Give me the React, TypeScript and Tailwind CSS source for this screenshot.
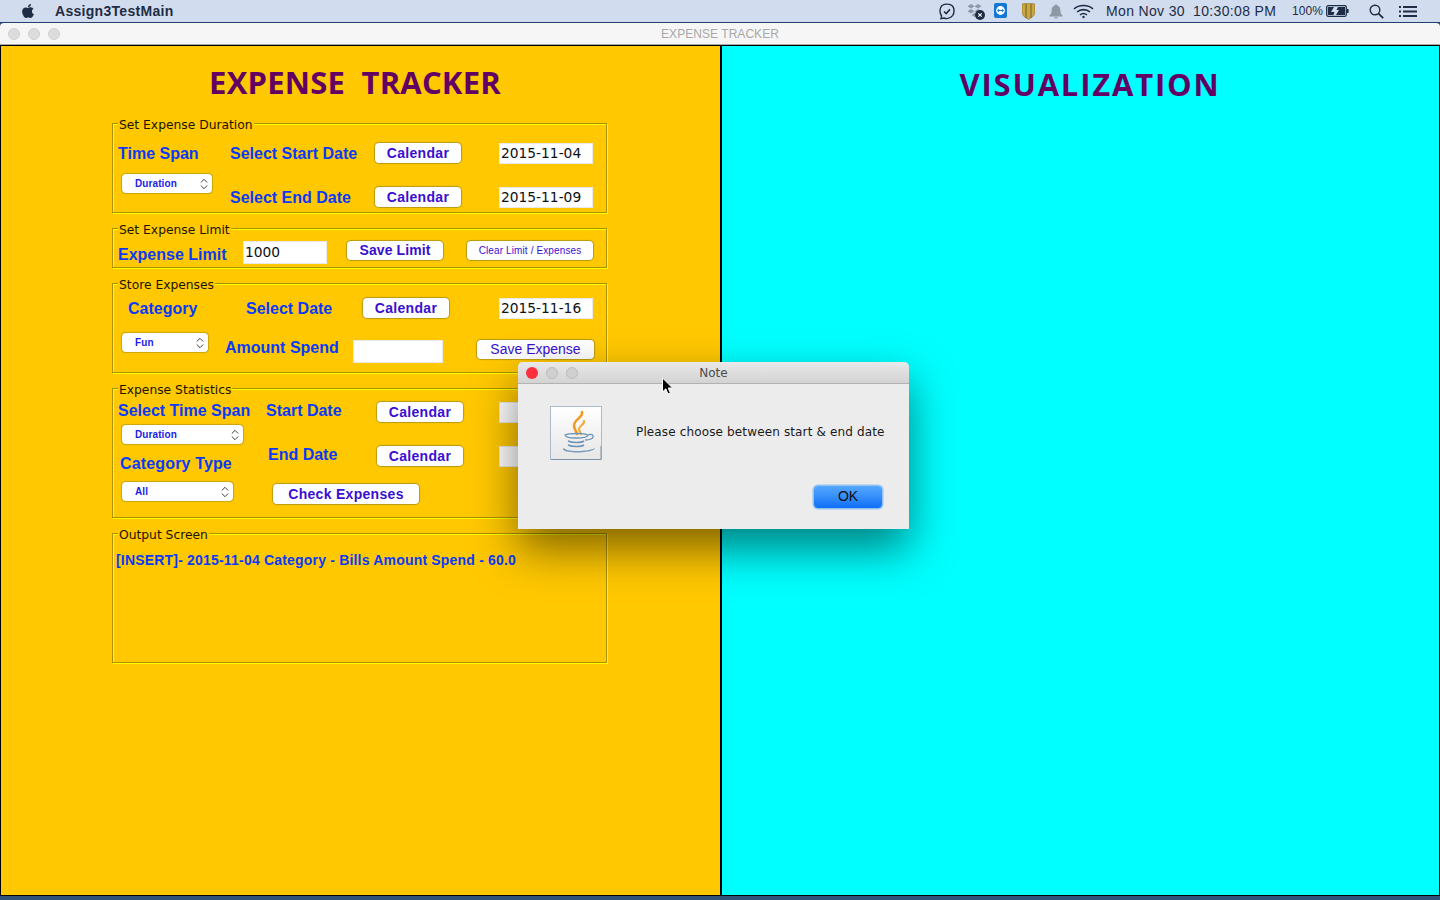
import React from 'react'
import { FaApple } from 'react-icons/fa'
import { ChevronsUpDown } from 'lucide-react'

const labelClass = "font-['Liberation_Sans',sans-serif] font-bold text-[16px] leading-[18px] text-[#0a3af8] whitespace-nowrap"

const Group = ({ title, className, children }: { title: string; className: string; children: React.ReactNode }) => (
    <fieldset className={`w-[495px] border border-[#ad9100] shadow-[1px_1px_0_#ffff00,inset_1px_1px_0_#ffff00] ${className}`}>
        <legend className="ml-[5px] h-[17px] bg-[#ffc800] px-[1px] font-['DejaVu_Sans',sans-serif] text-[12.3px] leading-[21px] text-[#1a1400]">{title}</legend>
        {children}
    </fieldset>
)

const Button = ({ label, className }: { label: string; className: string }) => (
    <div className={`flex h-[20px] shrink-0 items-center justify-center rounded-[4px] bg-white font-['Liberation_Sans',sans-serif] text-[#3a0fd2] shadow-[0_0_1px_1px_#b89a10] ${className}`}>
        {label}
    </div>
)

const Select = ({ label, className }: { label: string; className: string }) => (
    <div className={`flex h-[19px] shrink-0 items-center justify-between rounded-[4px] bg-white pl-[13px] pr-[1px] font-['Liberation_Sans',sans-serif] text-[10px] font-bold tracking-[0.1px] text-[#1a22e8] shadow-[0_0_1px_0.5px_#c9a60c] ${className}`}>
        <span>{label}</span>
        <ChevronsUpDown size={14} strokeWidth={1.6} className="text-[#333]" />
    </div>
)

const Field = ({ value, className }: { value: string; className: string }) => (
    <div className={`flex h-[21px] shrink-0 items-center border border-[#e9e9e9] bg-white pl-[1px] pt-[1px] font-['DejaVu_Sans',sans-serif] text-[13.8px] text-[#111] ${className}`}>
        {value}
    </div>
)

const JavaIcon = () => (
    <svg width="52" height="54" viewBox="0 0 52 54" className="rounded-[1px]">
        <defs>
            <linearGradient id="javaBg" x1="0" y1="0" x2="0" y2="1">
                <stop offset="0" stopColor="#ffffff" />
                <stop offset="1" stopColor="#e6e6e6" />
            </linearGradient>
        </defs>
        <rect x="0.5" y="0.5" width="51" height="53" fill="url(#javaBg)" stroke="#a9bccd" />
        <path d="M1 53.5 H51 V40" fill="none" stroke="#7f93a8" />
        <path d="M32 6 C34 11 23 14 24 20 C24.5 23 26 25 27 28" fill="none" stroke="#f29a1f" strokeWidth="2.6" strokeLinecap="round" />
        <path d="M34 15 C35 18 29 20 29 23 C29 25 30 26 31 28" fill="none" stroke="#f5ab3c" strokeWidth="2.2" strokeLinecap="round" />
        <path d="M15 29 C19 27 34 27 38 29 C38 31 33 32 26 32 C19 32 15 31 15 29 Z" fill="none" stroke="#6d93b5" strokeWidth="1.3" />
        <path d="M38 29 C43 27 45 31 41 33 C39 34 37 34 35 34" fill="none" stroke="#6d93b5" strokeWidth="1.3" />
        <path d="M18 35 C22 37 31 37 34 35" fill="none" stroke="#6d93b5" strokeWidth="1.6" />
        <path d="M18 39 C22 41 31 41 34 39" fill="none" stroke="#6d93b5" strokeWidth="1.6" />
        <path d="M14 42 C10 45 20 46.5 27 46.5 C34 46.5 45 45 45 42 C42 44 34 45 27 45 C20 45 15 44 14 42 Z" fill="#7b9dbb" />
    </svg>
)

const MenuBarIcons = () => (
    <div className="ml-auto flex items-center pr-[23px] text-[#1e2c45]">
        <svg width="16" height="17" viewBox="0 0 16 17" fill="none" stroke="#1e2c45" strokeWidth="1.4">
            <path d="M3 2.5 C6 0.6 11 0.6 13.5 3 C15.6 5.5 15.5 10 13.6 12.6 C11.6 15 8 16.2 5 15 L2 15.6 L2.6 13 C0.4 10 0.3 5 3 2.5 Z" />
            <path d="M5 8.5 L7.2 10.6 L11 6.4" strokeWidth="1.6" />
        </svg>
        <svg width="19" height="17" viewBox="0 0 19 17" className="ml-[11px]">
            <g fill="#8f98a6">
                <path d="M5 1 L8.5 3.2 L5 5.5 L1.5 3.2 Z" />
                <path d="M12 1 L15.5 3.2 L12 5.5 L8.5 3.2 Z" />
                <path d="M5 6 L8.5 8.2 L5 10.5 L1.5 8.2 Z" />
                <path d="M12 6 L15.5 8.2 L12 10.5 L8.5 8.2 Z" />
                <path d="M8.5 10 L11 12 L8.5 14 L5.5 12 Z" />
            </g>
            <circle cx="14" cy="12" r="5" fill="#1e2c45" />
            <path d="M12.3 10.3 L15.7 13.7 M15.7 10.3 L12.3 13.7" stroke="#fff" strokeWidth="1.1" />
        </svg>
        <svg width="13" height="16" viewBox="0 0 13 16" className="ml-[9px]">
            <rect x="0" y="0" width="13" height="15" rx="2" fill="#1477d4" />
            <circle cx="6.5" cy="7.5" r="4.4" fill="#fff" />
            <path d="M3 7.5 L5 5.8 V6.9 H8 V5.8 L10 7.5 L8 9.2 V8.1 H5 V9.2 Z" fill="#1477d4" />
        </svg>
        <svg width="13" height="17" viewBox="0 0 13 17" className="ml-[15px]">
            <path d="M0 1 C4 0 9 0 13 1 V9 C13 13 9 15 6.5 16.5 C4 15 0 13 0 9 Z" fill="#c9a63f" stroke="#8a7330" strokeWidth="0.6" />
            <path d="M4 1 V15 M9 1 V15" stroke="#7d6c34" strokeWidth="1.2" />
        </svg>
        <svg width="14" height="15" viewBox="0 0 14 15" className="ml-[14px]" fill="#8f98a6">
            <path d="M7 0.5 C7.8 0.5 8.2 1 8.2 1.6 C10.4 2.2 11.4 4 11.4 6.5 C11.4 9 12.2 10.4 13.6 11.6 V12.4 H0.4 V11.6 C1.8 10.4 2.6 9 2.6 6.5 C2.6 4 3.6 2.2 5.8 1.6 C5.8 1 6.2 0.5 7 0.5 Z" />
            <path d="M5.4 13 H8.6 C8.4 14 7.8 14.6 7 14.6 C6.2 14.6 5.6 14 5.4 13 Z" />
        </svg>
        <svg width="21" height="15" viewBox="0 0 21 15" className="ml-[10px]" fill="none" stroke="#1e2c45" strokeWidth="1.6">
            <path d="M1 5 C6 0.4 15 0.4 20 5" />
            <path d="M4 8 C7.5 4.8 13.5 4.8 17 8" />
            <path d="M7 11 C9 9.3 12 9.3 14 11" />
            <circle cx="10.5" cy="13" r="1.2" fill="#1e2c45" stroke="none" />
        </svg>
        <span className="ml-[12px] w-[87px] text-[14px] tracking-[0.35px]">Mon Nov 30</span>
        <span className="w-[99px] text-[14px] tracking-[0.35px]">10:30:08 PM</span>
        <span className="w-[34px] text-[12px] tracking-[0.1px]">100%</span>
        <svg width="23" height="12" viewBox="0 0 23 12">
            <rect x="0.7" y="0.7" width="19.6" height="10.6" rx="1.5" fill="none" stroke="#1e2c45" strokeWidth="1.3" />
            <path d="M2 2 H8 L5 7 H8.5 L7.5 10 H2 Z M12 2 H19 V10 H10 L13 5 H10.5 Z" fill="#1e2c45" />
            <rect x="21" y="4" width="1.6" height="4" fill="#1e2c45" />
        </svg>
        <svg width="15" height="15" viewBox="0 0 15 15" className="ml-[20px]" fill="none" stroke="#1e2c45" strokeWidth="1.4">
            <circle cx="6" cy="6" r="4.8" />
            <path d="M9.6 9.6 L14.2 14.2" strokeWidth="1.8" />
        </svg>
        <svg width="18" height="11" viewBox="0 0 18 11" className="ml-[15px]" fill="#1e2c45">
            <rect x="0" y="0" width="2" height="2" />
            <rect x="4" y="0" width="14" height="2" />
            <rect x="0" y="4.5" width="2" height="2" />
            <rect x="4" y="4.5" width="14" height="2" />
            <rect x="0" y="9" width="2" height="2" />
            <rect x="4" y="9" width="14" height="2" />
        </svg>
    </div>
)

const App = () => {
    return (
        <div className="relative flex h-[900px] w-[1440px] flex-col overflow-hidden bg-[#2f5379]">
            {/* system menu bar */}
            <div className="flex h-[23px] shrink-0 items-center border-b border-[#22406a] bg-[#d1dcee] font-['Liberation_Sans',sans-serif]">
                <FaApple className="ml-[20px] text-[16px] text-[#1e2c45]" />
                <span className="ml-[19px] text-[14px] font-bold tracking-[0.3px] text-[#1e2c45]">Assign3TestMain</span>
                <MenuBarIcons />
            </div>

            {/* window title bar */}
            <div className="relative flex h-[22px] shrink-0 items-center justify-center rounded-t-[4px] border-b border-[#a9a9a9] bg-[#f6f6f6] font-['Liberation_Sans',sans-serif] text-[12px] tracking-[0.05px] text-[#a8a8a8]">
                <div className="absolute left-[8px] top-[5px] flex gap-[8px]">
                    <span className="h-[12px] w-[12px] rounded-full border border-[#d2d2d2] bg-[#dddddd]" />
                    <span className="h-[12px] w-[12px] rounded-full border border-[#d2d2d2] bg-[#dddddd]" />
                    <span className="h-[12px] w-[12px] rounded-full border border-[#d2d2d2] bg-[#dddddd]" />
                </div>
                EXPENSE TRACKER
            </div>

            <div className="flex h-[851px] shrink-0">
                {/* left panel */}
                <div className="w-[721px] border border-black bg-[#ffc800]">
                    <h1 className="flex h-[69px] items-center justify-center pr-[11px] pt-[3px] font-['Open_Sans',sans-serif] text-[31px] font-bold tracking-[0.2px] text-[#630063]">
                        EXPENSE&nbsp;&nbsp;TRACKER
                    </h1>
                    <div className="ml-[111px] flex flex-col gap-[7px]">
                        <Group title="Set Expense Duration" className="h-[98px]">
                            <div className="flex pl-[5px] pt-[11px]">
                                <div className="w-[112px]">
                                    <div className={`${labelClass} flex h-[20px] items-center pt-[2px]`}>Time Span</div>
                                    <Select label="Duration" className="ml-[4px] mt-[11px] w-[90px]" />
                                </div>
                                <div className="flex flex-col gap-[24px]">
                                    <div className="flex h-[20px] items-center">
                                        <span className={`${labelClass} w-[145px] pt-[2px]`}>Select Start Date</span>
                                        <Button label="Calendar" className="w-[86px] text-[14px] font-bold tracking-[0.3px]" />
                                        <Field value="2015-11-04" className="ml-[38px] w-[94px]" />
                                    </div>
                                    <div className="flex h-[20px] items-center">
                                        <span className={`${labelClass} w-[145px] pt-[2px]`}>Select End Date</span>
                                        <Button label="Calendar" className="w-[86px] text-[14px] font-bold tracking-[0.3px]" />
                                        <Field value="2015-11-09" className="ml-[38px] w-[94px]" />
                                    </div>
                                </div>
                            </div>
                        </Group>

                        <Group title="Set Expense Limit" className="h-[48px]">
                            <div className="flex items-start pl-[5px] pt-[4px]">
                                <span className={`${labelClass} mt-[5px] w-[125px]`}>Expense Limit</span>
                                <Field value="1000" className="!h-[23px] w-[84px] !pt-0" />
                                <Button label="Save Limit" className="ml-[20px] !h-[19px] w-[96px] text-[14px] font-bold tracking-[0.1px]" />
                                <Button label="Clear Limit / Expenses" className="ml-[24px] !h-[19px] w-[126px] text-[10px] tracking-[0.12px]" />
                            </div>
                        </Group>

                        <Group title="Store Expenses" className="h-[98px]">
                            <div className="mt-[6px] flex h-[20px] items-center pl-[15px]">
                                <span className={`${labelClass} w-[118px] pt-[2px]`}>Category</span>
                                <span className={`${labelClass} w-[117px] pt-[2px]`}>Select Date</span>
                                <Button label="Calendar" className="w-[86px] text-[14px] font-bold tracking-[0.3px]" />
                                <Field value="2015-11-16" className="ml-[50px] w-[94px]" />
                            </div>
                            <div className="mt-[15px] flex items-start pl-[9px]">
                                <Select label="Fun" className="w-[86px]" />
                                <span className={`${labelClass} ml-[17px] mt-[6px] w-[128px]`}>Amount Spend</span>
                                <Field value="" className="mt-[7px] !h-[23px] w-[90px]" />
                                <Button label="Save Expense" className="ml-[34px] mt-[7px] !h-[19px] w-[117px] text-[14px]" />
                            </div>
                        </Group>

                        <Group title="Expense Statistics" className="h-[138px]">
                            <div className="flex pl-[5px] pt-[5px]">
                                <div className="w-[148px]">
                                    <div className={labelClass}>Select Time Span</div>
                                    <Select label="Duration" className="ml-[4px] mt-[5px] w-[121px]" />
                                    <div className={`${labelClass} ml-[2px] mt-[11px] tracking-[0.15px]`}>Category Type</div>
                                    <Select label="All" className="ml-[4px] mt-[9px] w-[111px]" />
                                </div>
                                <div>
                                    <div className="flex h-[20px] items-center">
                                        <span className={`${labelClass} w-[111px] pb-[2px]`}>Start Date</span>
                                        <Button label="Calendar" className="w-[86px] text-[14px] font-bold tracking-[0.3px]" />
                                        <Field value="" className="ml-[36px] w-[94px]" />
                                    </div>
                                    <div className="mt-[24px] flex h-[20px] items-center">
                                        <span className={`${labelClass} ml-[2px] w-[109px] pb-[2px]`}>End Date</span>
                                        <Button label="Calendar" className="w-[86px] text-[14px] font-bold tracking-[0.3px]" />
                                        <Field value="" className="ml-[36px] w-[94px]" />
                                    </div>
                                    <Button label="Check Expenses" className="ml-[7px] mt-[18px] w-[146px] text-[14px] font-bold tracking-[0.3px]" />
                                </div>
                            </div>
                        </Group>

                        <Group title="Output Screen" className="h-[138px]">
                            <div className="pl-[3px] pt-[10px] font-['Liberation_Sans',sans-serif] text-[14px] font-bold leading-[16px] tracking-[0.19px] text-[#0a3af8]">
                                [INSERT]- 2015-11-04 Category - Bills Amount Spend - 60.0
                            </div>
                        </Group>
                    </div>
                </div>

                {/* right panel */}
                <div className="w-[719px] border border-black bg-[#00ffff]">
                    <h1 className="flex h-[72px] items-center justify-center pl-[19px] pt-[4px] font-['Open_Sans',sans-serif] text-[31px] font-bold tracking-[1.8px] text-[#630063]">
                        VISUALIZATION
                    </h1>
                </div>
            </div>

            {/* message dialog */}
            <div className="absolute left-[518px] top-[362px] w-[391px] rounded-t-[5px] bg-[#ececec] shadow-[0_20px_45px_0_rgba(0,0,0,0.5)]">
                <div className="relative flex h-[22px] items-center justify-center rounded-t-[5px] border-b border-[#b2b2b2] bg-linear-to-b from-[#e9e9e9] to-[#d3d3d3] pt-[1px] font-['DejaVu_Sans',sans-serif] text-[12px] text-[#4c4c4c]">
                    <div className="absolute left-[8px] top-[5px] flex gap-[8px]">
                        <span className="h-[12px] w-[12px] rounded-full bg-[#fc2f3d]" />
                        <span className="h-[12px] w-[12px] rounded-full border border-[#bdbdbd] bg-[#d0d0d0]" />
                        <span className="h-[12px] w-[12px] rounded-full border border-[#bdbdbd] bg-[#d0d0d0]" />
                    </div>
                    Note
                </div>
                <div className="flex h-[145px] flex-col">
                    <div className="flex pl-[32px] pt-[22px]">
                        <JavaIcon />
                        <span className="ml-[34px] mt-[18px] font-['DejaVu_Sans',sans-serif] text-[12px] leading-[16px] tracking-[0.14px] text-[#1a1a1a]">Please choose between start &amp; end date</span>
                    </div>
                    <div className="mr-[27px] mt-[26px] flex h-[22px] w-[68px] items-center justify-center self-end rounded-[4px] bg-linear-to-b from-[#54a8fd] to-[#0d70f7] pb-[1px] font-['Liberation_Sans',sans-serif] text-[14px] text-[#0c0c0c] shadow-[0_0_0_1.5px_#93c2f3]">
                        OK
                    </div>
                </div>
            </div>

            {/* mouse pointer */}
            <svg width="13" height="19" viewBox="0 0 13 19" className="absolute left-[661px] top-[377px]">
                <path d="M1.5 1 V15 L4.8 11.8 L7 17 L9.4 16 L7.2 11 H11.6 Z" fill="#000" stroke="#fff" strokeWidth="1" />
            </svg>
        </div>
    )
}

export default App
